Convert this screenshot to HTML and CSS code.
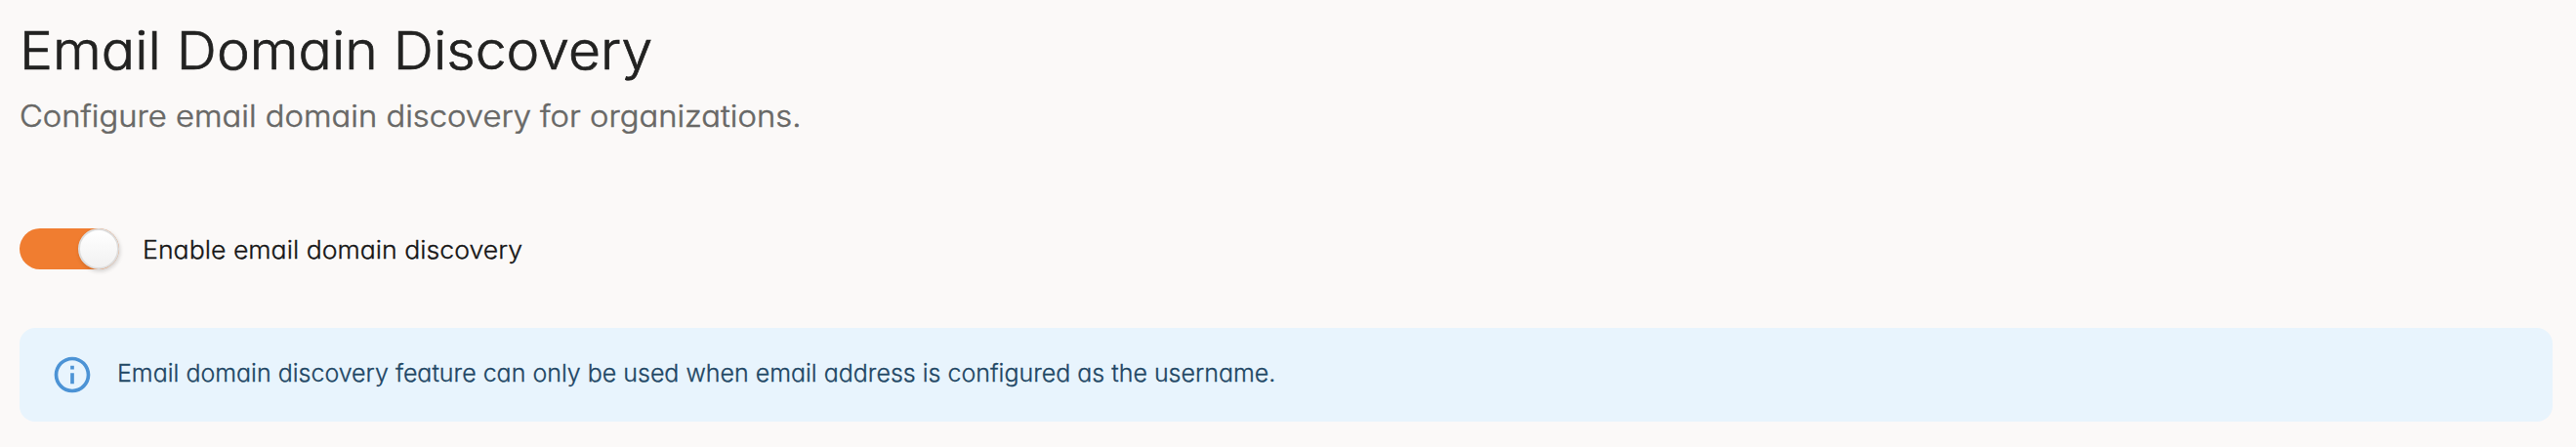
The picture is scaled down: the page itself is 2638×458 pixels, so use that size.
FILE: index.html
```html
<!DOCTYPE html>
<html lang="en">
<head>
<meta charset="utf-8">
<title>Email Domain Discovery</title>
<link rel="stylesheet" href="styles.css">
</head>
<body>
<main class="page">
  <header class="page-header">
    <h1 class="title">Email Domain Discovery</h1>
    <p class="subtitle">Configure email domain discovery for organizations.</p>
  </header>
  <label class="toggle-row">
    <span class="toggle" role="switch" aria-checked="true"><span class="knob"></span></span>
    <span class="toggle-label">Enable email domain discovery</span>
  </label>
  <section class="alert" role="status">
    <svg class="alert-icon" viewBox="0 0 24 24" aria-hidden="true"><path d="M11 7h2v2h-2zM11 11h2v6h-2zM12 2C6.48 2 2 6.48 2 12s4.480 10 10 10 10-4.480 10-10S17.520 2 12 2zm0 18c-4.410 0-8-3.590-8-8s3.590-8 8-8 8 3.590 8 8-3.590 8-8 8z"/></svg>
    <span class="alert-text">Email domain discovery feature can only be used when email address is configured as the username.</span>
  </section>
</main>
</body>
</html>
```
FILE: styles.css
```css
* { box-sizing: border-box; }
body {
  margin: 0;
  background: #fbf9f8;
  font-family: Inter, "Open Sans", sans-serif;
  font-feature-settings: "cv11" 1;
  font-weight: 300;
  -webkit-text-stroke: 0.3px currentColor;
}
.page {
  height: 458px;
  padding: 16px 24px 26px 20px;
  overflow: hidden;
}
.page-header {
  display: flex;
  flex-direction: column;
  align-items: flex-start;
}
.title,
.subtitle,
.toggle-label,
.alert-text {
  transform-origin: left center;
  white-space: nowrap;
}
.title {
  margin: 0;
  font-size: 54px;
  line-height: 72px;
  font-weight: 300;
  color: #222221;
  -webkit-text-stroke-width: 0.7px;
  transform: scaleX(1.057);
}
.subtitle {
  margin: 10px 0 0;
  font-size: 31px;
  line-height: 42px;
  color: #686866;
  -webkit-text-stroke-width: 0.5px;
  transform: scaleX(1.057);
}
.toggle-row {
  display: flex;
  align-items: center;
  gap: 24px;
  height: 42px;
  margin-top: 94px;
}
.toggle {
  display: flex;
  justify-content: flex-end;
  width: 102px;
  height: 42px;
  border-radius: 21px;
  background: #f07d30;
}
.knob {
  width: 42px;
  height: 42px;
  border: 2px solid #dddddd;
  border-radius: 50%;
  background: linear-gradient(#ffffff, #f1f1f1);
  box-shadow: 1px 2px 4px rgba(0, 0, 0, 0.16);
}
.toggle-label {
  padding-top: 2px;
  font-size: 25px;
  color: #161616;
  transform: scaleX(1.067);
}
.alert {
  display: flex;
  align-items: center;
  gap: 24px;
  height: 96px;
  margin-top: 60px;
  padding: 0 32px;
  border-radius: 16px;
  background: #e8f4fd;
}
.alert-icon {
  width: 44px;
  height: 44px;
  fill: #4c93d5;
}
.alert-text {
  padding-bottom: 3px;
  font-size: 24px;
  color: #1e4664;
  transform: scaleX(1.041);
}
```
